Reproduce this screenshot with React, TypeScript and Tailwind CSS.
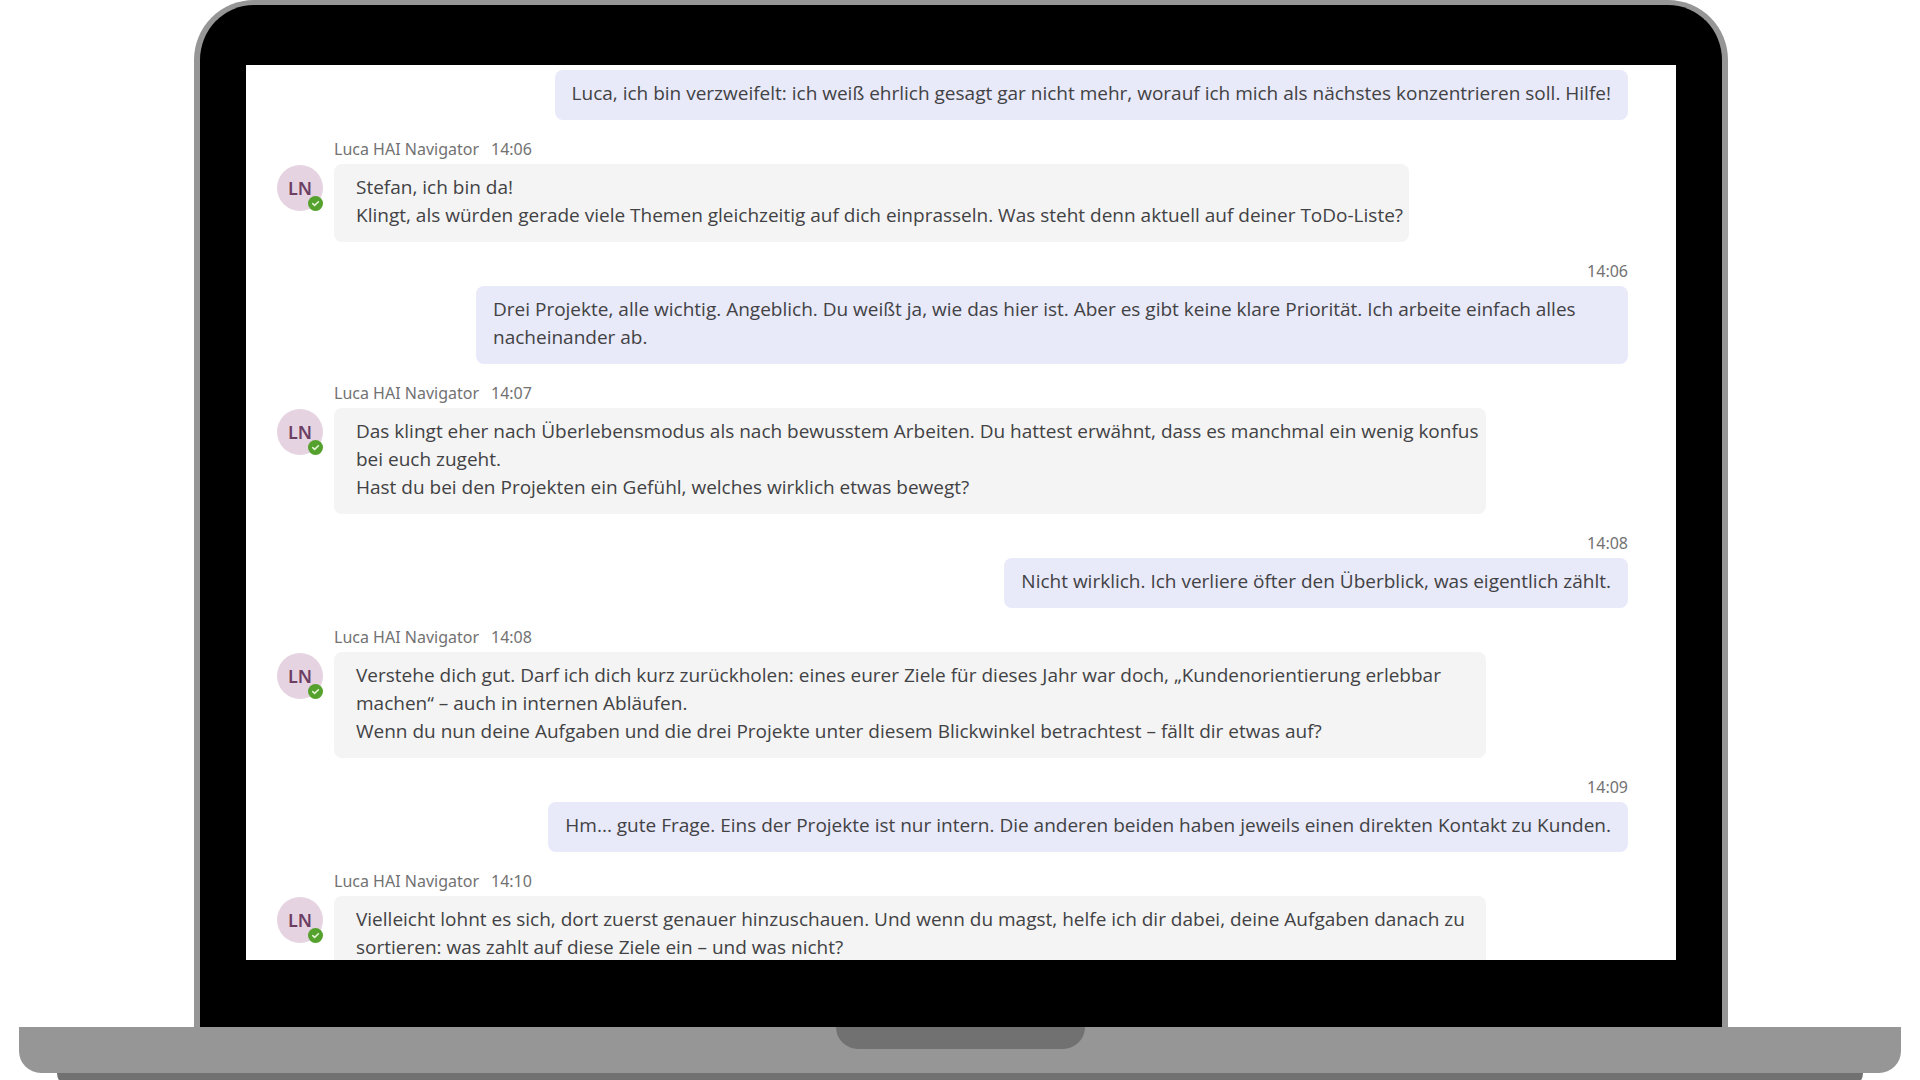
interface Message {
  id: number;
  own: boolean;
  time?: string;
  lines: string[];
}

const SENDER = 'Luca HAI Navigator';

const messages: Message[] = [
  {
    id: 1,
    own: true,
    lines: ['Luca, ich bin verzweifelt: ich weiß ehrlich gesagt gar nicht mehr, worauf ich mich als nächstes konzentrieren soll. Hilfe!']
  },
  {
    id: 2,
    own: false,
    time: '14:06',
    lines: [
      'Stefan, ich bin da!',
      'Klingt, als würden gerade viele Themen gleichzeitig auf dich einprasseln. Was steht denn aktuell auf deiner ToDo-Liste?'
    ]
  },
  {
    id: 3,
    own: true,
    time: '14:06',
    lines: ['Drei Projekte, alle wichtig. Angeblich. Du weißt ja, wie das hier ist. Aber es gibt keine klare Priorität. Ich arbeite einfach alles nacheinander ab.']
  },
  {
    id: 4,
    own: false,
    time: '14:07',
    lines: [
      'Das klingt eher nach Überlebensmodus als nach bewusstem Arbeiten. Du hattest erwähnt, dass es manchmal ein wenig konfus bei euch zugeht.',
      'Hast du bei den Projekten ein Gefühl, welches wirklich etwas bewegt?'
    ]
  },
  {
    id: 5,
    own: true,
    time: '14:08',
    lines: ['Nicht wirklich. Ich verliere öfter den Überblick, was eigentlich zählt.']
  },
  {
    id: 6,
    own: false,
    time: '14:08',
    lines: [
      'Verstehe dich gut. Darf ich dich kurz zurückholen: eines eurer Ziele für dieses Jahr war doch, „Kundenorientierung erlebbar machen“ – auch in internen Abläufen.',
      'Wenn du nun deine Aufgaben und die drei Projekte unter diesem Blickwinkel betrachtest – fällt dir etwas auf?'
    ]
  },
  {
    id: 7,
    own: true,
    time: '14:09',
    lines: ['Hm... gute Frage. Eins der Projekte ist nur intern. Die anderen beiden haben jeweils einen direkten Kontakt zu Kunden.']
  },
  {
    id: 8,
    own: false,
    time: '14:10',
    lines: [
      'Vielleicht lohnt es sich, dort zuerst genauer hinzuschauen. Und wenn du magst, helfe ich dir dabei, deine Aufgaben danach zu sortieren: was zahlt auf diese Ziele ein – und was nicht?'
    ]
  }
];

function Avatar() {
  return (
    <div className="relative mt-[26px] flex size-[46px] shrink-0 items-center justify-center rounded-full bg-[#e6d3e2]">
      <span className="text-[18px] font-semibold text-[#6b3f63]">LN</span>
      <svg viewBox="0 0 14 14" className="absolute right-0 bottom-0 size-[15px]" aria-label="Verfügbar">
        <circle cx="7" cy="7" r="7" fill="#55a12d" />
        <path d="M4.4 7.2 6.2 8.8 9.7 5.4" fill="none" stroke="#e4f5d8" strokeWidth="1.5" strokeLinecap="round" />
      </svg>
    </div>
  );
}

function Bubble({ message }: { message: Message }) {
  return (
    <div
      className={`max-w-[1152px] rounded-lg pt-[9px] pb-[13px] font-['Open_Sans','Noto_Sans',sans-serif] text-[19px] leading-[28px] text-[#424244] ${
        message.own ? 'bg-[#e8e9f9] px-[17px]' : 'bg-[#f4f4f4] pr-[6px] pl-[22px]'
      }`}
    >
      {message.lines.map((line) => (
        <p key={line}>{line}</p>
      ))}
    </div>
  );
}

function OwnMessage({ message }: { message: Message }) {
  return (
    <li className="flex flex-col items-end">
      {message.time && (
        <time className="mb-[5px] text-[16px] leading-[20px] text-[#727272]">{message.time}</time>
      )}
      <Bubble message={message} />
    </li>
  );
}

function ContactMessage({ message }: { message: Message }) {
  return (
    <li className="flex items-start gap-[11px]">
      <Avatar />
      <div className="flex flex-col items-start">
        <div className="mb-[5px] flex gap-3 text-[16px] leading-[20px] text-[#727272]">
          <span>{SENDER}</span>
          <time>{message.time}</time>
        </div>
        <Bubble message={message} />
      </div>
    </li>
  );
}

export default function App() {
  return (
    <div className="flex h-screen flex-col overflow-hidden bg-white font-['Noto_Sans',sans-serif]">
      {/* lid */}
      <div className="mr-[192px] ml-[194px] flex min-h-0 flex-1 flex-col rounded-t-[60px] border-x-[6px] border-t-[5px] border-[#969696] bg-black px-[46px] pt-[60px] pb-[67px]">
        <main className="min-h-0 flex-1 overflow-hidden bg-white pt-[5px] pr-12 pl-[31px]">
          <ul className="flex flex-col gap-[19px]">
            {messages.map((message) =>
              message.own ? (
                <OwnMessage key={message.id} message={message} />
              ) : (
                <ContactMessage key={message.id} message={message} />
              )
            )}
          </ul>
        </main>
      </div>

      {/* base */}
      <div className="mx-[19px] flex h-[46px] shrink-0 items-start justify-center rounded-b-[22px] bg-[#969696]">
        <div className="h-[22px] w-[249px] rounded-b-[22px] bg-[#717171]" />
      </div>
      <div className="mx-[57px] -mb-[7px] h-[14px] shrink-0 rounded-b-[14px] bg-[#717171]" />
    </div>
  );
}
